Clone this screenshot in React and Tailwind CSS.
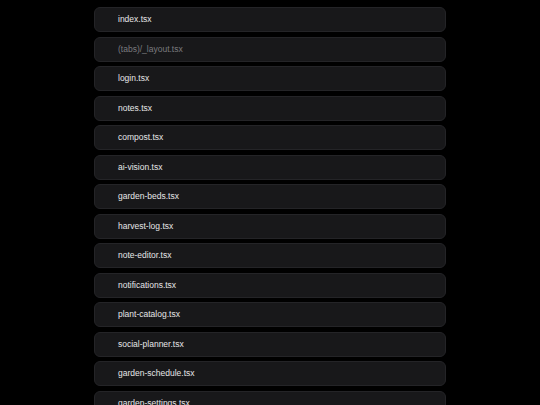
import React from 'react';

const files = [
  { name: 'index.tsx' },
  { name: '(tabs)/_layout.tsx', muted: true },
  { name: 'login.tsx' },
  { name: 'notes.tsx' },
  { name: 'compost.tsx' },
  { name: 'ai-vision.tsx' },
  { name: 'garden-beds.tsx' },
  { name: 'harvest-log.tsx' },
  { name: 'note-editor.tsx' },
  { name: 'notifications.tsx' },
  { name: 'plant-catalog.tsx' },
  { name: 'social-planner.tsx' },
  { name: 'garden-schedule.tsx' },
  { name: 'garden-settings.tsx' },
];

const App = () => {
  return (
    <div
      className="min-h-screen bg-black pt-[7px]"
      style={{ fontFamily: '"Liberation Sans", Arial, sans-serif' }}
    >
      <div className="mx-auto flex w-[352px] flex-col gap-[4.5px]">
        {files.map((f) => (
          <div
            key={f.name}
            className="flex h-[25px] shrink-0 items-center rounded-[6px] border border-[#242427] bg-[#18181a] pl-[23px]"
          >
            <span className={`text-[8.5px] ${f.muted ? 'text-[#7a7a7e]' : 'text-[#e6e6e8]'}`}>
              {f.name}
            </span>
          </div>
        ))}
      </div>
    </div>
  );
};

export default App;
